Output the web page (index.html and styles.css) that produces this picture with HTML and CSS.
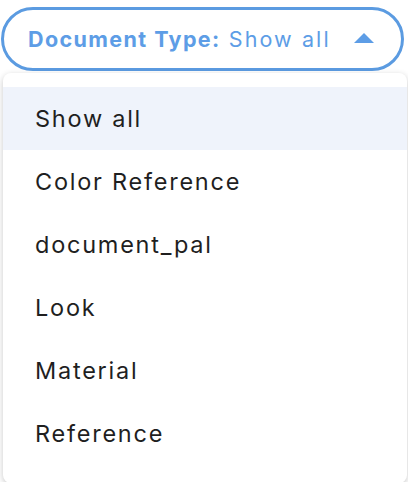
FILE: index.html
```html
<!DOCTYPE html>
<html>
<head>
<meta charset="utf-8">
<link rel="stylesheet" href="styles.css">
</head>
<body>
<div class="wrap">
  <button class="pill">
    <span class="label"><b>Document Type:</b> Show all</span>
    <svg class="caret" width="20" height="10" viewBox="0 0 20 10"><path d="M0 10 L10 0 L20 10 Z" fill="#5d9de6"/></svg>
  </button>
  <ul class="menu">
    <li class="item active">Show all</li>
    <li class="item">Color Reference</li>
    <li class="item">document_pal</li>
    <li class="item">Look</li>
    <li class="item">Material</li>
    <li class="item">Reference</li>
  </ul>
</div>
</body>
</html>
```
FILE: styles.css
```css
html, body {
  margin: 0;
  padding: 0;
  background: #ffffff;
  width: 408px;
  height: 482px;
  overflow: hidden;
}
body {
  font-family: "Inter", "Liberation Sans", sans-serif;
}
.wrap {
  display: flex;
  flex-direction: column;
  padding: 7px 4px 0 1px;
}
.pill {
  box-sizing: border-box;
  height: 64px;
  width: 403px;
  border: 3px solid #5b9be1;
  border-radius: 32px;
  background: #fff;
  display: flex;
  align-items: center;
  justify-content: space-between;
  padding: 0 27px 0 24px;
  font-family: inherit;
  color: #5d9de6;
  font-size: 21.5px;
  cursor: pointer;
}
.label b {
  font-weight: 700;
  letter-spacing: 1.4px;
}
.label {
  font-weight: 400;
  letter-spacing: 2.1px;
}
.caret {
  display: block;
  margin-top: -2px;
}
.menu {
  list-style: none;
  margin: 2px -3px 0 2px;
  padding: 14px 0 20px;
  background: #fff;
  border-radius: 8px;
  box-shadow: 0 2px 6px rgba(0, 0, 0, 0.22);
  height: 410px;
  box-sizing: border-box;
}
.item {
  height: 63px;
  display: flex;
  align-items: center;
  padding-left: 32px;
  font-size: 23.5px;
  color: #1f1f1f;
  letter-spacing: 1.75px;
}
.item.active {
  background: #eff3fb;
}
```
